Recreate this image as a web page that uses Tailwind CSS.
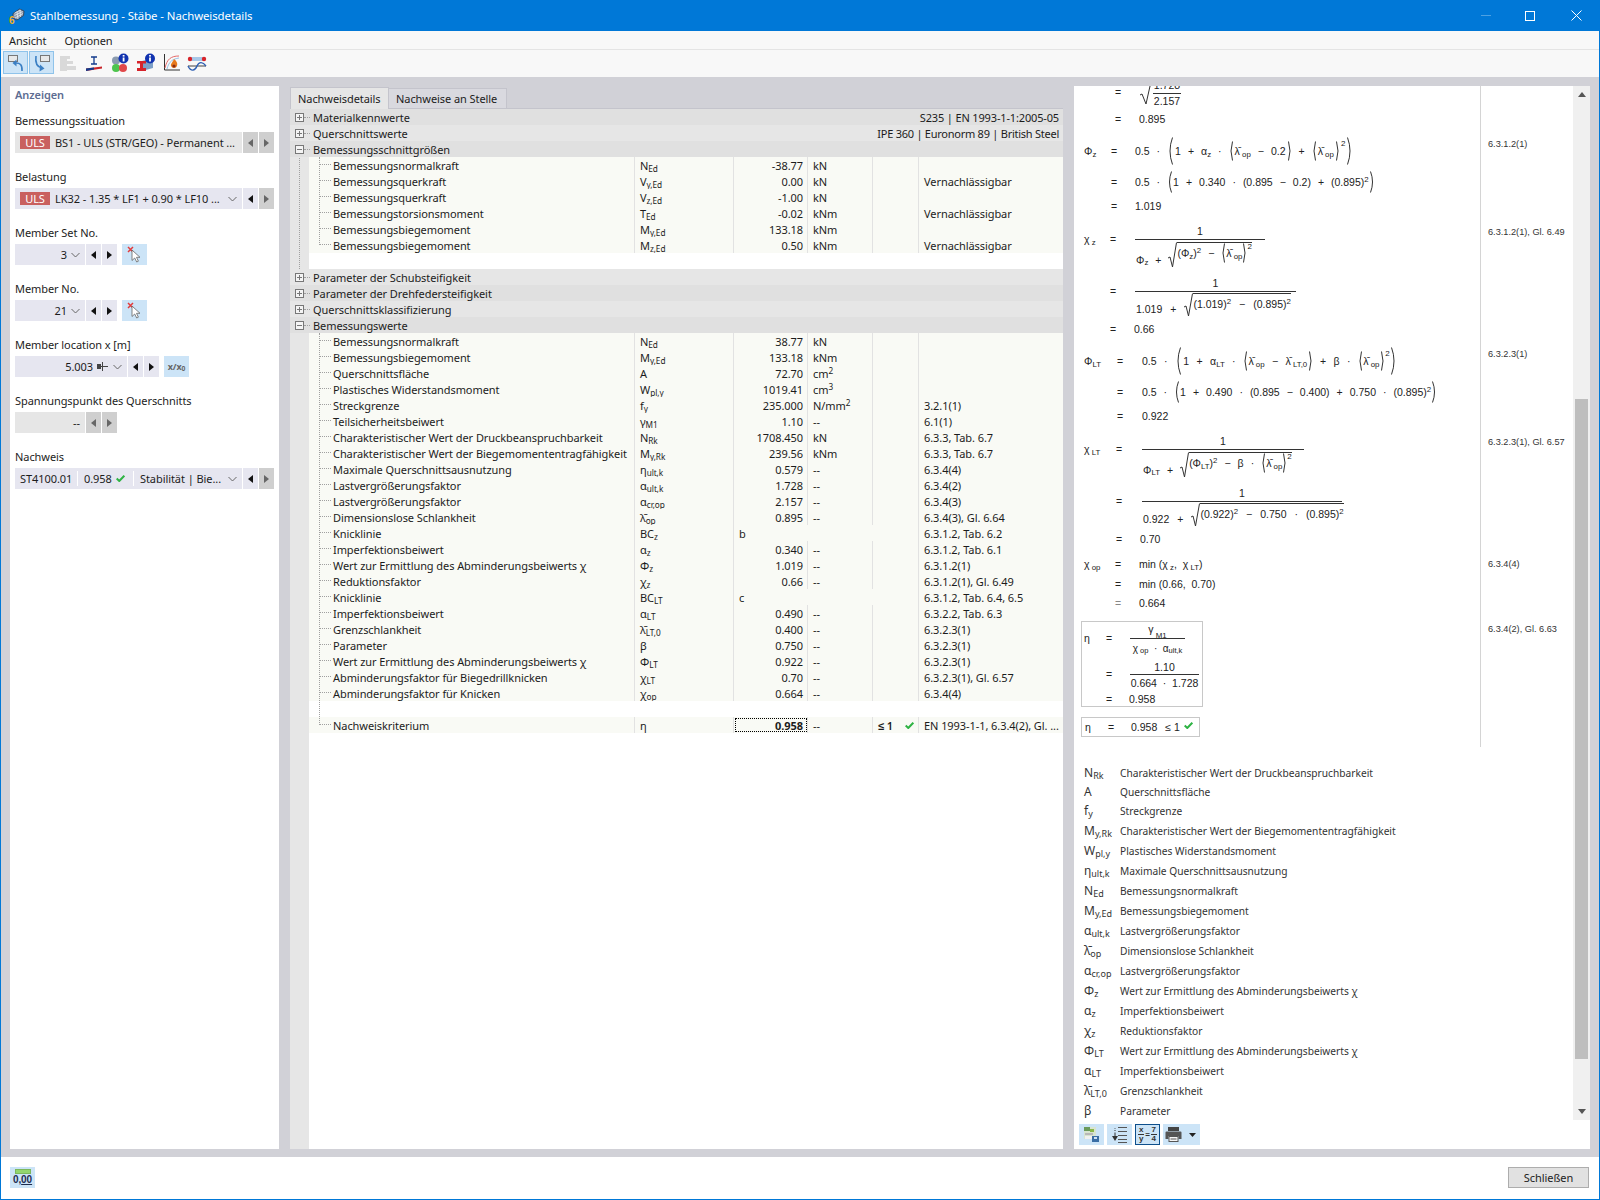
<!DOCTYPE html>
<html lang="de">
<head>
<meta charset="utf-8">
<title>Stahlbemessung</title>
<script src="https://cdn.jsdelivr.net/npm/@tailwindcss/browser@4"></script>
</head>
<body class="w-[1600px] h-[1200px] overflow-hidden bg-white font-['Noto_Sans',sans-serif] text-[11px] tracking-[-0.07px] leading-4 text-[#1c1c1c] whitespace-nowrap">
<div class="flex flex-col h-[1200px] border-x border-b border-[#0078d7]">

<!-- title bar -->
<div class="h-[31px] bg-[#0078d7] flex items-center text-white text-[11.4px] shrink-0">
  <svg class="ml-[8px] w-[16px] h-[16px]" viewBox="0 0 16 16"><path d="M4 5.5 L10.5 1 L15 3 L14.5 7.5 L8 12 L4 10Z" fill="#8f9db0" stroke="#2e3a4c" stroke-width=".8"/><path d="M5.5 5 L12 2 M5.5 7.5 L13.5 3.6 M6 10 L14 5.5 M8 3.5 L9 11 M11 2 L11.5 9" stroke="#eef2f6" stroke-width=".7"/><text x="0" y="15.5" font-size="10" font-weight="700" fill="#f2b01e" font-family="Liberation Sans">6</text></svg>
  <span class="ml-[5px]">Stahlbemessung - Stäbe - Nachweisdetails</span>
  <div class="ml-auto flex items-center">
    <span class="w-[10px] h-px bg-[#4da1e3]"></span>
    <span class="ml-[34px] w-[10px] h-[10px] border border-white"></span>
    <svg class="ml-[36px] mr-[17px] w-[11px] h-[11px]" viewBox="0 0 11 11" stroke="#fff" fill="none"><path d="M.5.5l10 10M10.5.5l-10 10"/></svg>
  </div>
</div>

<!-- menu -->
<div class="h-[18px] bg-[#f8f8f8] flex items-end gap-[18px] pl-[8px] shrink-0">
  <span>Ansicht</span><span>Optionen</span>
</div>
<div class="h-px bg-[#e4e4e4] shrink-0"></div>

<!-- toolbar -->
<div class="h-[27px] bg-[#f8f8f8] flex items-start pt-[1px] pl-[2px] shrink-0">
  <div class="w-[25px] h-[23px] bg-[#cce4f7] border border-[#8fc3ea] flex items-center justify-center">
    <svg class="w-[18px] h-[18px]" viewBox="0 0 18 18" fill="none"><rect x="1.5" y="1.5" width="9" height="6" fill="#e8e8e8" stroke="#777"/><path d="M15 17C15.5 11 13 8.5 8 9" stroke="#3a7fc4" stroke-width="1.6"/><path d="M9.5 5.5 L5.5 9 L9.5 12.5Z" fill="#3a7fc4"/></svg>
  </div>
  <div class="ml-px w-[25px] h-[23px] bg-[#cce4f7] border border-[#8fc3ea] flex items-center justify-center">
    <svg class="w-[18px] h-[18px]" viewBox="0 0 18 18" fill="none"><rect x="7.5" y="1.5" width="9" height="6" fill="#e8e8e8" stroke="#777"/><path d="M3 2C2 9 4 13 9 14" stroke="#3a7fc4" stroke-width="1.6"/><path d="M7 10.5 L11.5 14.5 L6.5 17.5Z" fill="#3a7fc4"/></svg>
  </div>
  <div class="ml-[3px] w-[22px] h-[23px] flex items-center justify-center">
    <svg class="w-[18px] h-[18px]" viewBox="0 0 18 18" fill="#d9d9d9"><rect x="1" y="2" width="7" height="15"/><rect x="8" y="2" width="3" height="3"/><rect x="8" y="7" width="6" height="3"/><rect x="8" y="12" width="9" height="4"/></svg>
  </div>
  <div class="ml-[4px] w-[22px] h-[23px] flex items-center justify-center">
    <svg class="w-[18px] h-[18px]" viewBox="0 0 18 18" fill="none"><path d="M6 3H12M9 3V10M6 10H12" stroke="#123a8c" stroke-width="1.3"/><path d="M1 17V14.5L17 12.5V14.5Z" fill="#c8252a"/><path d="M1 17V14.5L9 13.5V15.5Z" fill="#123a8c"/></svg>
  </div>
  <div class="ml-[4px] w-[22px] h-[23px] flex items-center justify-center">
    <svg class="w-[20px] h-[20px]" viewBox="0 0 20 20"><circle cx="6" cy="7.5" r="4" fill="#8a9bb0"/><circle cx="6" cy="15" r="4" fill="#4dc44d"/><circle cx="13" cy="15" r="4" fill="#e0484a"/><circle cx="13.5" cy="5.5" r="5" fill="#1233b0"/><rect x="12.7" y="4.5" width="1.8" height="4" fill="#fff"/><rect x="12.7" y="2" width="1.8" height="1.6" fill="#fff"/></svg>
  </div>
  <div class="ml-[4px] w-[22px] h-[23px] flex items-center justify-center">
    <svg class="w-[20px] h-[20px]" viewBox="0 0 20 20"><path d="M6 8L17 5V15L6 18Z" fill="#7d9fc7"/><path d="M1 8H10V10.5H7V15H10V18H1V15H4V10.5H1Z" fill="#d6222a"/><circle cx="14" cy="5.5" r="5" fill="#1233b0"/><rect x="13.1" y="4.5" width="1.8" height="4" fill="#fff"/><rect x="13.1" y="2" width="1.8" height="1.6" fill="#fff"/></svg>
  </div>
  <div class="ml-[3px] w-[22px] h-[23px] flex items-center justify-center">
    <svg class="w-[19px] h-[19px]" viewBox="0 0 19 19" fill="none"><path d="M2.5 1V17H18" stroke="#333"/><path d="M3 15C5 6 9 3 17 3" stroke="#e56a6a"/><path d="M5 16C7 8 11 6 17 5" stroke="#9cc4e8"/><path d="M12 6C14.5 8 16 10 15 13a3.2 3.2 0 0 1-6 0C8.5 10.5 11 9 12 6Z" fill="#e8791a"/><circle cx="12" cy="13" r="1.6" fill="#8a2b12"/></svg>
  </div>
  <div class="ml-[4px] w-[22px] h-[23px] flex items-center justify-center">
    <svg class="w-[20px] h-[18px]" viewBox="0 0 20 18" fill="none"><rect x="2" y="3" width="16" height="4" fill="#a8c8e8"/><circle cx="3" cy="5" r="2.2" fill="#d8242a"/><circle cx="17" cy="5" r="2.2" fill="#d8242a"/><path d="M1 12H19" stroke="#444"/><path d="M1 12C4 18 8 17 10 12C12 7 16 8 19 12" stroke="#2e5fb3" stroke-width="1.4"/></svg>
  </div>
</div>

<!-- main area -->
<div class="flex-1 min-h-0 bg-[#d1d1d7] flex pl-[9px] pt-[9px] pb-[8px] gap-[11px]">

  <!-- left panel -->
  <div class="w-[269px] bg-white pl-[5px] flex flex-col shrink-0">
    <div class="mt-px h-4 text-[#5d6d92] font-semibold">Anzeigen</div>
    <div class="mt-[10px] flex flex-col gap-[16px]">

      <div>
        <div class="h-4">Bemessungssituation</div>
        <div class="mt-[3px] h-[21px] flex items-stretch gap-px">
          <div class="w-[227px] bg-[#e6e6e6] flex items-center pl-[5px]"><span class="w-[30px] h-[13px] bg-[#c9605f] text-white flex items-center justify-center">ULS</span><span class="ml-[5px]">BS1 - ULS (STR/GEO) - Permanent ...</span></div>
          <div class="w-[15px] bg-[#cfcfcf] flex items-center justify-center"><svg class="w-[5px] h-[8px]" viewBox="0 0 5 8"><path d="M5 0V8L0 4Z" fill="#666"/></svg></div>
          <div class="w-[15px] bg-[#cfcfcf] flex items-center justify-center"><svg class="w-[5px] h-[8px]" viewBox="0 0 5 8"><path d="M0 0V8L5 4Z" fill="#666"/></svg></div>
        </div>
      </div>

      <div>
        <div class="h-4">Belastung</div>
        <div class="mt-[3px] h-[21px] flex items-stretch gap-px">
          <div class="w-[227px] bg-[#e6e6f0] flex items-center pl-[5px] pr-[5px]"><span class="w-[30px] h-[13px] bg-[#c9605f] text-white flex items-center justify-center">ULS</span><span class="ml-[5px]">LK32 - 1.35 * LF1 + 0.90 * LF10 ...</span><svg class="ml-auto w-[9px] h-[6px]" viewBox="0 0 9 6" fill="none" stroke="#666"><path d="M.5 1L4.5 5L8.5 1"/></svg></div>
          <div class="w-[15px] bg-[#e6e6f0] flex items-center justify-center"><svg class="w-[5px] h-[8px]" viewBox="0 0 5 8"><path d="M5 0V8L0 4Z" fill="#111"/></svg></div>
          <div class="w-[15px] bg-[#cfcfcf] flex items-center justify-center"><svg class="w-[5px] h-[8px]" viewBox="0 0 5 8"><path d="M0 0V8L5 4Z" fill="#666"/></svg></div>
        </div>
      </div>

      <div>
        <div class="h-4">Member Set No.</div>
        <div class="mt-[3px] h-[21px] flex items-stretch gap-px">
          <div class="w-[70px] bg-[#e6e6f0] flex items-center justify-end pr-[5px]"><span>3</span><svg class="ml-[4px] w-[9px] h-[6px]" viewBox="0 0 9 6" fill="none" stroke="#666"><path d="M.5 1L4.5 5L8.5 1"/></svg></div>
          <div class="w-[15px] bg-[#e6e6f0] flex items-center justify-center"><svg class="w-[5px] h-[8px]" viewBox="0 0 5 8"><path d="M5 0V8L0 4Z" fill="#111"/></svg></div>
          <div class="w-[15px] bg-[#e6e6f0] flex items-center justify-center"><svg class="w-[5px] h-[8px]" viewBox="0 0 5 8"><path d="M0 0V8L5 4Z" fill="#111"/></svg></div>
          <div class="ml-[4px] w-[25px] bg-[#cce4f7] flex items-center justify-center"><svg class="w-[16px] h-[17px]" viewBox="0 0 16 17" fill="none"><path d="M1 1L6 6M6 1L1 6" stroke="#e23b3b" stroke-width="1.5"/><path d="M5 4V14.5L7.7 12L9.7 16L11.4 15.2L9.5 11.3H13Z" fill="#fff" stroke="#666" stroke-width=".8"/></svg></div>
        </div>
      </div>

      <div>
        <div class="h-4">Member No.</div>
        <div class="mt-[3px] h-[21px] flex items-stretch gap-px">
          <div class="w-[70px] bg-[#e6e6f0] flex items-center justify-end pr-[5px]"><span>21</span><svg class="ml-[4px] w-[9px] h-[6px]" viewBox="0 0 9 6" fill="none" stroke="#666"><path d="M.5 1L4.5 5L8.5 1"/></svg></div>
          <div class="w-[15px] bg-[#e6e6f0] flex items-center justify-center"><svg class="w-[5px] h-[8px]" viewBox="0 0 5 8"><path d="M5 0V8L0 4Z" fill="#111"/></svg></div>
          <div class="w-[15px] bg-[#e6e6f0] flex items-center justify-center"><svg class="w-[5px] h-[8px]" viewBox="0 0 5 8"><path d="M0 0V8L5 4Z" fill="#111"/></svg></div>
          <div class="ml-[4px] w-[25px] bg-[#cce4f7] flex items-center justify-center"><svg class="w-[16px] h-[17px]" viewBox="0 0 16 17" fill="none"><path d="M1 1L6 6M6 1L1 6" stroke="#e23b3b" stroke-width="1.5"/><path d="M5 4V14.5L7.7 12L9.7 16L11.4 15.2L9.5 11.3H13Z" fill="#fff" stroke="#666" stroke-width=".8"/></svg></div>
        </div>
      </div>

      <div>
        <div class="h-4">Member location x [m]</div>
        <div class="mt-[3px] h-[21px] flex items-stretch gap-px">
          <div class="w-[112px] bg-[#e6e6f0] flex items-center justify-end pr-[5px]"><span>5.003</span><svg class="ml-[4px] w-[11px] h-[9px]" viewBox="0 0 11 9"><rect x="0" y="2" width="4" height="5" fill="#444"/><path d="M4 4.5H11M5.5 0V9" stroke="#444"/></svg><svg class="ml-[5px] w-[9px] h-[6px]" viewBox="0 0 9 6" fill="none" stroke="#666"><path d="M.5 1L4.5 5L8.5 1"/></svg></div>
          <div class="w-[15px] bg-[#e6e6f0] flex items-center justify-center"><svg class="w-[5px] h-[8px]" viewBox="0 0 5 8"><path d="M5 0V8L0 4Z" fill="#111"/></svg></div>
          <div class="w-[15px] bg-[#e6e6f0] flex items-center justify-center"><svg class="w-[5px] h-[8px]" viewBox="0 0 5 8"><path d="M0 0V8L5 4Z" fill="#111"/></svg></div>
          <div class="ml-[4px] w-[25px] bg-[#cce4f7] flex items-center justify-center text-[9px] font-bold text-[#666]"><span>x/x<sub>0</sub></span></div>
        </div>
      </div>

      <div>
        <div class="h-4">Spannungspunkt des Querschnitts</div>
        <div class="mt-[3px] h-[21px] flex items-stretch gap-px">
          <div class="w-[70px] bg-[#e6e6e6] flex items-center justify-end pr-[5px]"><span>--</span></div>
          <div class="w-[15px] bg-[#cfcfcf] flex items-center justify-center"><svg class="w-[5px] h-[8px]" viewBox="0 0 5 8"><path d="M5 0V8L0 4Z" fill="#666"/></svg></div>
          <div class="w-[15px] bg-[#cfcfcf] flex items-center justify-center"><svg class="w-[5px] h-[8px]" viewBox="0 0 5 8"><path d="M0 0V8L5 4Z" fill="#666"/></svg></div>
        </div>
      </div>

      <div>
        <div class="h-4">Nachweis</div>
        <div class="mt-[3px] h-[21px] flex items-stretch gap-px">
          <div class="w-[227px] bg-[#e6e6f0] flex items-center pl-[5px] pr-[5px]">
            <span class="w-[57px]">ST4100.01</span><span class="h-[15px] w-px bg-white"></span>
            <span class="ml-[6px] w-[32px]">0.958</span><svg class="w-[9px] h-[7px]" viewBox="0 0 9 7" fill="none" stroke="#2fb344" stroke-width="2"><path d="M.7 3.5L3.3 6L8.3 .7"/></svg>
            <span class="ml-[8px] h-[15px] w-px bg-white"></span><span class="ml-[6px]">Stabilität | Bie...</span>
            <svg class="ml-auto w-[9px] h-[6px]" viewBox="0 0 9 6" fill="none" stroke="#666"><path d="M.5 1L4.5 5L8.5 1"/></svg>
          </div>
          <div class="w-[15px] bg-[#e6e6f0] flex items-center justify-center"><svg class="w-[5px] h-[8px]" viewBox="0 0 5 8"><path d="M5 0V8L0 4Z" fill="#111"/></svg></div>
          <div class="w-[15px] bg-[#cfcfcf] flex items-center justify-center"><svg class="w-[5px] h-[8px]" viewBox="0 0 5 8"><path d="M0 0V8L5 4Z" fill="#666"/></svg></div>
        </div>
      </div>

    </div>
  </div>

  <!-- middle panel -->
  <div class="w-[773px] flex flex-col shrink-0">
    <div class="h-[23px] flex items-end border-b border-[#c4c4cc] shrink-0">
      <div class="w-[99px] h-[22px] bg-[#e6e6e6] border-x border-t border-[#c4c4cc] flex items-center pl-[7px] -mb-px">Nachweisdetails</div>
      <div class="w-[118px] h-[20px] bg-[#d9d9df] border-r border-t border-[#c4c4cc] flex items-center pl-[7px]">Nachweise an Stelle</div>
    </div>
    <div class="relative flex-1 min-h-0 bg-[#e6e6e6] flex flex-col">
      <span class="absolute left-[9px] top-[6px] h-[210px] border-l border-dotted border-[#a0a0a0]"></span>

      <div class="relative h-4 bg-[#e0e0e0] flex items-center pl-[5px] pr-[4px]">
        <svg class="w-[9px] h-[9px] shrink-0" viewBox="0 0 9 9" fill="#f4f4f4" stroke="#777"><rect x=".5" y=".5" width="8" height="8"/><path d="M2 4.5H7M4.5 2V7"/></svg><span class="w-[6px] border-t border-dotted border-[#a0a0a0]"></span>
        <span class="ml-[3px] mt-[2px]">Materialkennwerte</span><span class="ml-auto mt-[2px] tracking-[-0.15px]">S235 | EN 1993-1-1:2005-05</span>
      </div>
      <div class="relative h-4 bg-[#e6e6e6] flex items-center pl-[5px] pr-[4px]">
        <svg class="w-[9px] h-[9px] shrink-0" viewBox="0 0 9 9" fill="#f4f4f4" stroke="#777"><rect x=".5" y=".5" width="8" height="8"/><path d="M2 4.5H7M4.5 2V7"/></svg><span class="w-[6px] border-t border-dotted border-[#a0a0a0]"></span>
        <span class="ml-[3px] mt-[2px]">Querschnittswerte</span><span class="ml-auto mt-[2px] tracking-[-0.25px]">IPE 360 | Euronorm 89 | British Steel</span>
      </div>
      <div class="relative h-4 bg-[#e0e0e0] flex items-center pl-[5px] pr-[4px]">
        <svg class="w-[9px] h-[9px] shrink-0" viewBox="0 0 9 9" fill="#f4f4f4" stroke="#777"><rect x=".5" y=".5" width="8" height="8"/><path d="M2 4.5H7"/></svg><span class="w-[6px] border-t border-dotted border-[#a0a0a0]"></span>
        <span class="ml-[3px] mt-[2px]">Bemessungsschnittgrößen</span>
      </div>

      <div class="relative ml-[19px]">
        <span class="absolute left-[10px] top-0 h-[88px] border-l border-dotted border-[#a0a0a0] z-10"></span>
        <table class="table-fixed w-[754px] border-separate border-spacing-0 bg-[#f9faf5] [&_td]:h-4 [&_td]:pt-px [&_td]:pb-0 [&_td]:px-0 [&_td]:leading-[15px] [&_td]:overflow-hidden [&_td]:border-r [&_td]:border-[#e2e2e2] [&_td:last-child]:border-r-0 [&_td:nth-child(n+2)]:pl-[5px] [&_td:nth-child(3)]:text-right [&_td:nth-child(3)]:pr-[4px] [&_td:first-child]:relative [&_td:first-child]:pl-[24px] [&_td:first-child]:before:content-[''] [&_td:first-child]:before:absolute [&_td:first-child]:before:left-[11px] [&_td:first-child]:before:top-[7px] [&_td:first-child]:before:w-[11px] [&_td:first-child]:before:border-t [&_td:first-child]:before:border-dotted [&_td:first-child]:before:border-[#a0a0a0]">
          <colgroup><col class="w-[326px]"><col class="w-[99px]"><col class="w-[74px]"><col class="w-[65px]"><col class="w-[46px]"><col class="w-[144px]"></colgroup>
          <tr><td>Bemessungsnormalkraft</td><td>N<sub>Ed</sub></td><td>-38.77</td><td>kN</td><td></td><td></td></tr>
          <tr><td>Bemessungsquerkraft</td><td>V<sub>y,Ed</sub></td><td>0.00</td><td>kN</td><td></td><td>Vernachlässigbar</td></tr>
          <tr><td>Bemessungsquerkraft</td><td>V<sub>z,Ed</sub></td><td>-1.00</td><td>kN</td><td></td><td></td></tr>
          <tr><td>Bemessungstorsionsmoment</td><td>T<sub>Ed</sub></td><td>-0.02</td><td>kNm</td><td></td><td>Vernachlässigbar</td></tr>
          <tr><td>Bemessungsbiegemoment</td><td>M<sub>y,Ed</sub></td><td>133.18</td><td>kNm</td><td></td><td></td></tr>
          <tr><td>Bemessungsbiegemoment</td><td>M<sub>z,Ed</sub></td><td>0.50</td><td>kNm</td><td></td><td>Vernachlässigbar</td></tr>
        </table>
      </div>
      <div class="ml-[19px] h-4 bg-white"></div>

      <div class="relative h-4 bg-[#e6e6e6] flex items-center pl-[5px] pr-[4px]">
        <svg class="w-[9px] h-[9px] shrink-0" viewBox="0 0 9 9" fill="#f4f4f4" stroke="#777"><rect x=".5" y=".5" width="8" height="8"/><path d="M2 4.5H7M4.5 2V7"/></svg><span class="w-[6px] border-t border-dotted border-[#a0a0a0]"></span>
        <span class="ml-[3px] mt-[2px]">Parameter der Schubsteifigkeit</span>
      </div>
      <div class="relative h-4 bg-[#e0e0e0] flex items-center pl-[5px] pr-[4px]">
        <svg class="w-[9px] h-[9px] shrink-0" viewBox="0 0 9 9" fill="#f4f4f4" stroke="#777"><rect x=".5" y=".5" width="8" height="8"/><path d="M2 4.5H7M4.5 2V7"/></svg><span class="w-[6px] border-t border-dotted border-[#a0a0a0]"></span>
        <span class="ml-[3px] mt-[2px]">Parameter der Drehfedersteifigkeit</span>
      </div>
      <div class="relative h-4 bg-[#e6e6e6] flex items-center pl-[5px] pr-[4px]">
        <svg class="w-[9px] h-[9px] shrink-0" viewBox="0 0 9 9" fill="#f4f4f4" stroke="#777"><rect x=".5" y=".5" width="8" height="8"/><path d="M2 4.5H7M4.5 2V7"/></svg><span class="w-[6px] border-t border-dotted border-[#a0a0a0]"></span>
        <span class="ml-[3px] mt-[2px]">Querschnittsklassifizierung</span>
      </div>
      <div class="relative h-4 bg-[#e0e0e0] flex items-center pl-[5px] pr-[4px]">
        <svg class="w-[9px] h-[9px] shrink-0" viewBox="0 0 9 9" fill="#f4f4f4" stroke="#777"><rect x=".5" y=".5" width="8" height="8"/><path d="M2 4.5H7"/></svg><span class="w-[6px] border-t border-dotted border-[#a0a0a0]"></span>
        <span class="ml-[3px] mt-[2px]">Bemessungswerte</span>
      </div>

      <div class="relative ml-[19px] bg-white">
        <span class="absolute left-[10px] top-0 h-[392px] border-l border-dotted border-[#a0a0a0] z-10"></span>
        <table class="table-fixed w-[754px] border-separate border-spacing-0 bg-[#f9faf5] [&_td]:h-4 [&_td]:pt-px [&_td]:pb-0 [&_td]:px-0 [&_td]:leading-[15px] [&_td]:overflow-hidden [&_td]:border-r [&_td]:border-[#e2e2e2] [&_td:last-child]:border-r-0 [&_td:nth-child(n+2)]:pl-[5px] [&_td:nth-child(3)]:text-right [&_td:nth-child(3)]:pr-[4px] [&_td:first-child]:relative [&_td:first-child]:pl-[24px] [&_td:first-child]:before:content-[''] [&_td:first-child]:before:absolute [&_td:first-child]:before:left-[11px] [&_td:first-child]:before:top-[7px] [&_td:first-child]:before:w-[11px] [&_td:first-child]:before:border-t [&_td:first-child]:before:border-dotted [&_td:first-child]:before:border-[#a0a0a0]">
          <colgroup><col class="w-[326px]"><col class="w-[99px]"><col class="w-[74px]"><col class="w-[65px]"><col class="w-[46px]"><col class="w-[144px]"></colgroup>
          <tr><td>Bemessungsnormalkraft</td><td>N<sub>Ed</sub></td><td>38.77</td><td>kN</td><td></td><td></td></tr>
          <tr><td>Bemessungsbiegemoment</td><td>M<sub>y,Ed</sub></td><td>133.18</td><td>kNm</td><td></td><td></td></tr>
          <tr><td>Querschnittsfläche</td><td>A</td><td>72.70</td><td>cm<sup>2</sup></td><td></td><td></td></tr>
          <tr><td>Plastisches Widerstandsmoment</td><td>W<sub>pl,y</sub></td><td>1019.41</td><td>cm<sup>3</sup></td><td></td><td></td></tr>
          <tr><td>Streckgrenze</td><td>f<sub>y</sub></td><td>235.000</td><td>N/mm<sup>2</sup></td><td></td><td>3.2.1(1)</td></tr>
          <tr><td>Teilsicherheitsbeiwert</td><td>γ<sub>M1</sub></td><td>1.10</td><td>--</td><td></td><td>6.1(1)</td></tr>
          <tr><td>Charakteristischer Wert der Druckbeanspruchbarkeit</td><td>N<sub>Rk</sub></td><td>1708.450</td><td>kN</td><td></td><td>6.3.3, Tab. 6.7</td></tr>
          <tr><td>Charakteristischer Wert der Biegemomententragfähigkeit</td><td>M<sub>y,Rk</sub></td><td>239.56</td><td>kNm</td><td></td><td>6.3.3, Tab. 6.7</td></tr>
          <tr><td>Maximale Querschnittsausnutzung</td><td>η<sub>ult,k</sub></td><td>0.579</td><td>--</td><td></td><td>6.3.4(4)</td></tr>
          <tr><td>Lastvergrößerungsfaktor</td><td>α<sub>ult,k</sub></td><td>1.728</td><td>--</td><td></td><td>6.3.4(2)</td></tr>
          <tr><td>Lastvergrößerungsfaktor</td><td>α<sub>cr,op</sub></td><td>2.157</td><td>--</td><td></td><td>6.3.4(3)</td></tr>
          <tr><td>Dimensionslose Schlankheit</td><td>λ̄<sub>op</sub></td><td>0.895</td><td>--</td><td></td><td>6.3.4(3), Gl. 6.64</td></tr>
          <tr><td>Knicklinie</td><td>BC<sub>z</sub></td><td colspan="3" class="!text-left">b</td><td>6.3.1.2, Tab. 6.2</td></tr>
          <tr><td>Imperfektionsbeiwert</td><td>α<sub>z</sub></td><td>0.340</td><td>--</td><td></td><td>6.3.1.2, Tab. 6.1</td></tr>
          <tr><td>Wert zur Ermittlung des Abminderungsbeiwerts χ</td><td>Φ<sub>z</sub></td><td>1.019</td><td>--</td><td></td><td>6.3.1.2(1)</td></tr>
          <tr><td>Reduktionsfaktor</td><td>χ<sub>z</sub></td><td>0.66</td><td>--</td><td></td><td>6.3.1.2(1), Gl. 6.49</td></tr>
          <tr><td>Knicklinie</td><td>BC<sub>LT</sub></td><td colspan="3" class="!text-left">c</td><td>6.3.1.2, Tab. 6.4, 6.5</td></tr>
          <tr><td>Imperfektionsbeiwert</td><td>α<sub>LT</sub></td><td>0.490</td><td>--</td><td></td><td>6.3.2.2, Tab. 6.3</td></tr>
          <tr><td>Grenzschlankheit</td><td>λ̄<sub>LT,0</sub></td><td>0.400</td><td>--</td><td></td><td>6.3.2.3(1)</td></tr>
          <tr><td>Parameter</td><td>β</td><td>0.750</td><td>--</td><td></td><td>6.3.2.3(1)</td></tr>
          <tr><td>Wert zur Ermittlung des Abminderungsbeiwerts χ</td><td>Φ<sub>LT</sub></td><td>0.922</td><td>--</td><td></td><td>6.3.2.3(1)</td></tr>
          <tr><td>Abminderungsfaktor für Biegedrillknicken</td><td>χ<sub>LT</sub></td><td>0.70</td><td>--</td><td></td><td>6.3.2.3(1), Gl. 6.57</td></tr>
          <tr><td>Abminderungsfaktor für Knicken</td><td>χ<sub>op</sub></td><td>0.664</td><td>--</td><td></td><td>6.3.4(4)</td></tr>
        </table>
        <div class="h-4 bg-white"></div>
        <table class="table-fixed w-[754px] border-separate border-spacing-0 bg-[#f9faf5] [&_td]:h-4 [&_td]:pt-px [&_td]:pb-0 [&_td]:px-0 [&_td]:leading-[15px] [&_td]:overflow-hidden [&_td]:border-r [&_td]:border-[#e2e2e2] [&_td:last-child]:border-r-0 [&_td:nth-child(n+2)]:pl-[5px] [&_td:nth-child(3)]:text-right [&_td:nth-child(3)]:pr-[4px] [&_td:first-child]:relative [&_td:first-child]:pl-[24px] [&_td:first-child]:before:content-[''] [&_td:first-child]:before:absolute [&_td:first-child]:before:left-[11px] [&_td:first-child]:before:top-[7px] [&_td:first-child]:before:w-[11px] [&_td:first-child]:before:border-t [&_td:first-child]:before:border-dotted [&_td:first-child]:before:border-[#a0a0a0]">
          <colgroup><col class="w-[326px]"><col class="w-[99px]"><col class="w-[74px]"><col class="w-[65px]"><col class="w-[46px]"><col class="w-[144px]"></colgroup>
          <tr><td>Nachweiskriterium</td><td>η</td><td class="font-bold outline-1 outline-dotted outline-black -outline-offset-2">0.958</td><td>--</td><td class="font-semibold"><span class="flex items-center justify-between pr-[4px]"><span>≤ 1</span><svg class="w-[9px] h-[7px]" viewBox="0 0 9 7" fill="none" stroke="#2fb344" stroke-width="2"><path d="M.7 3.5L3.3 6L8.3 .7"/></svg></span></td><td>EN 1993-1-1, 6.3.4(2), Gl. ...</td></tr>
        </table>
      </div>
      <div class="ml-[19px] flex-1 bg-white"></div>
    </div>
  </div>

  <!-- right panel -->
  <div class="w-[516px] flex flex-col shrink-0 bg-white">
    <div class="h-[1034px] flex shrink-0">
      <div class="w-[499px] overflow-hidden">
        <div class="h-[661px] flex">
          <!-- formulas -->
          <div class="w-[407px] pl-[10px] overflow-hidden font-['Liberation_Sans',sans-serif] text-[10.5px] tracking-normal text-[#222] border-r border-[#d4d4d4] whitespace-nowrap">

            <div class="-mt-[2px] flex h-4 items-center"><span class="ml-[31px] w-[24px]">=</span>
              <span class="flex items-center"><svg class="w-[13px] h-[26px]" viewBox="0 0 13 26" fill="none" stroke="#333"><path d="M1 16L3 15L7 25L12.5 .5"/></svg>
                <span class="ml-px flex flex-col items-center w-[28px]"><span class="h-[17px] flex items-end">1.728</span><span class="h-px w-full bg-[#333]"></span><span class="h-[15px] leading-[15px]">2.157</span></span></span>
            </div>
            <div class="mt-[11px] flex h-4 items-center"><span class="ml-[31px] w-[24px]">=</span><span>0.895</span></div>

            <div class="mt-[16px] flex h-4 items-center"><span class="w-[27px]">Φ<sub>z</sub></span><span class="w-[24px]">=</span>
              <span class="flex items-center gap-[7px]"><span>0.5</span><span>·</span>
                <svg class="w-[6px] h-7" viewBox="0 0 6 28" fill="none" stroke="#333"><path d="M5.5 .5Q.5 14 5.5 27.5"/></svg><span class="-ml-[5px]">1</span><span>+</span><span>α<sub>z</sub></span><span>·</span>
                <svg class="w-[4px] h-[20px]" viewBox="0 0 4 20" fill="none" stroke="#333"><path d="M3.5 .5Q.5 10 3.5 19.5"/></svg><span class="-ml-[5px]">λ̄<sub>&nbsp;op</sub></span><span>−</span><span>0.2</span>
                <svg class="-ml-[5px] w-[4px] h-[20px]" viewBox="0 0 4 20" fill="none" stroke="#333"><path d="M.5 .5Q3.5 10 .5 19.5"/></svg><span>+</span>
                <svg class="w-[4px] h-[20px]" viewBox="0 0 4 20" fill="none" stroke="#333"><path d="M3.5 .5Q.5 10 3.5 19.5"/></svg><span class="-ml-[5px]">λ̄<sub>&nbsp;op</sub></span>
                <svg class="-ml-[5px] w-[4px] h-[20px]" viewBox="0 0 4 20" fill="none" stroke="#333"><path d="M.5 .5Q3.5 10 .5 19.5"/></svg><span class="-ml-[6px] -mt-[14px] text-[8px]">2</span>
                <svg class="-ml-[5px] w-[6px] h-7" viewBox="0 0 6 28" fill="none" stroke="#333"><path d="M.5 .5Q5.5 14 .5 27.5"/></svg>
              </span>
            </div>
            <div class="mt-[15px] flex h-4 items-center"><span class="ml-[27px] w-[24px]">=</span>
              <span class="flex items-center gap-[7px]"><span>0.5</span><span>·</span>
                <svg class="w-[5px] h-[22px]" viewBox="0 0 5 22" fill="none" stroke="#333"><path d="M4.5 .5Q.5 11 4.5 21.5"/></svg><span class="-ml-[6px]">1</span><span>+</span><span>0.340</span><span>·</span><span>(0.895</span><span>−</span><span>0.2)</span><span>+</span><span>(0.895)<sup>2</sup></span>
                <svg class="-ml-[6px] w-[5px] h-[22px]" viewBox="0 0 5 22" fill="none" stroke="#333"><path d="M.5 .5Q4.5 11 .5 21.5"/></svg>
              </span>
            </div>
            <div class="mt-[8px] flex h-4 items-center"><span class="ml-[27px] w-[24px]">=</span><span>1.019</span></div>

            <div class="mt-[17px] flex h-4 items-center"><span class="w-[26px]">χ<sub>&nbsp;z</sub></span><span class="w-[25px]">=</span>
              <span class="flex flex-col items-center w-[130px]"><span class="h-[28px] flex items-end">1</span><span class="h-px w-full bg-[#333]"></span>
                <span class="h-[28px] pt-[2px] flex items-start gap-[7px] w-full"><span class="mt-[10px] ml-[1px] flex gap-[7px]"><span>Φ<sub>z</sub></span><span>+</span></span>
                  <span class="flex"><svg class="w-[9px] h-[26px]" viewBox="0 0 9 26" fill="none" stroke="#333"><path d="M0 16L2 15L4.5 25L8.5 .5"/></svg>
                  <span class="flex items-center gap-[7px] border-t border-[#333] h-[22px]"><span>(Φ<sub>z</sub>)<sup>2</sup></span><span>−</span><svg class="w-[4px] h-[20px]" viewBox="0 0 4 20" fill="none" stroke="#333"><path d="M3.5 .5Q.5 10 3.5 19.5"/></svg><span class="-ml-[6px]">λ̄<sub>&nbsp;op</sub></span><svg class="-ml-[6px] w-[4px] h-[20px]" viewBox="0 0 4 20" fill="none" stroke="#333"><path d="M.5 .5Q3.5 10 .5 19.5"/></svg><span class="-ml-[7px] -mt-[12px] text-[8px]">2</span></span></span>
                </span></span>
            </div>
            <div class="mt-[36px] flex h-4 items-center"><span class="ml-[26px] w-[25px]">=</span>
              <span class="flex flex-col items-center w-[161px]"><span class="h-[24px] flex items-end">1</span><span class="h-px w-full bg-[#333]"></span>
                <span class="h-[24px] flex items-start gap-[8px] w-full"><span class="mt-[9px] ml-[1px] flex gap-[8px]"><span>1.019</span><span>+</span></span>
                  <span class="flex mt-[1px]"><svg class="w-[9px] h-[24px]" viewBox="0 0 9 24" fill="none" stroke="#333"><path d="M0 14L2 13L4.5 23L8.5 .5"/></svg>
                  <span class="flex items-center gap-[8px] border-t border-[#333] h-[21px]"><span>(1.019)<sup>2</sup></span><span>−</span><span>(0.895)<sup>2</sup></span></span></span>
                </span></span>
            </div>
            <div class="mt-[22px] flex h-4 items-center"><span class="ml-[26px] w-[24px]">=</span><span>0.66</span></div>

            <div class="mt-[16px] flex h-4 items-center"><span class="w-[33px]">Φ<sub>LT</sub></span><span class="w-[25px]">=</span>
              <span class="flex items-center gap-[7.4px]"><span>0.5</span><span>·</span>
                <svg class="w-[6px] h-7" viewBox="0 0 6 28" fill="none" stroke="#333"><path d="M5.5 .5Q.5 14 5.5 27.5"/></svg><span class="-ml-[5px]">1</span><span>+</span><span>α<sub>LT</sub></span><span>·</span>
                <svg class="w-[4px] h-[20px]" viewBox="0 0 4 20" fill="none" stroke="#333"><path d="M3.5 .5Q.5 10 3.5 19.5"/></svg><span class="-ml-[6px]">λ̄<sub>&nbsp;op</sub></span><span>−</span><span>λ̄<sub>&nbsp;LT,0</sub></span>
                <svg class="-ml-[6px] w-[4px] h-[20px]" viewBox="0 0 4 20" fill="none" stroke="#333"><path d="M.5 .5Q3.5 10 .5 19.5"/></svg><span>+</span><span>β</span><span>·</span>
                <svg class="w-[4px] h-[20px]" viewBox="0 0 4 20" fill="none" stroke="#333"><path d="M3.5 .5Q.5 10 3.5 19.5"/></svg><span class="-ml-[6px]">λ̄<sub>&nbsp;op</sub></span>
                <svg class="-ml-[6px] w-[4px] h-[20px]" viewBox="0 0 4 20" fill="none" stroke="#333"><path d="M.5 .5Q3.5 10 .5 19.5"/></svg><span class="-ml-[7px] -mt-[14px] text-[8px]">2</span>
                <svg class="-ml-[6px] w-[6px] h-7" viewBox="0 0 6 28" fill="none" stroke="#333"><path d="M.5 .5Q5.5 14 .5 27.5"/></svg>
              </span>
            </div>
            <div class="mt-[15px] flex h-4 items-center"><span class="ml-[33px] w-[25px]">=</span>
              <span class="flex items-center gap-[7px]"><span>0.5</span><span>·</span>
                <svg class="w-[5px] h-[22px]" viewBox="0 0 5 22" fill="none" stroke="#333"><path d="M4.5 .5Q.5 11 4.5 21.5"/></svg><span class="-ml-[6px]">1</span><span>+</span><span>0.490</span><span>·</span><span>(0.895</span><span>−</span><span>0.400)</span><span>+</span><span>0.750</span><span>·</span><span>(0.895)<sup>2</sup></span>
                <svg class="-ml-[6px] w-[5px] h-[22px]" viewBox="0 0 5 22" fill="none" stroke="#333"><path d="M.5 .5Q4.5 11 .5 21.5"/></svg>
              </span>
            </div>
            <div class="mt-[8px] flex h-4 items-center"><span class="ml-[33px] w-[25px]">=</span><span>0.922</span></div>

            <div class="mt-[17px] flex h-4 items-center"><span class="w-[32px]">χ<sub>&nbsp;LT</sub></span><span class="w-[26px]">=</span>
              <span class="flex flex-col items-center w-[162px]"><span class="h-[28px] flex items-end">1</span><span class="h-px w-full bg-[#333]"></span>
                <span class="h-[28px] pt-[2px] flex items-start gap-[7px] w-full"><span class="mt-[10px] ml-[1px] flex gap-[7px]"><span>Φ<sub>LT</sub></span><span>+</span></span>
                  <span class="flex"><svg class="w-[9px] h-[26px]" viewBox="0 0 9 26" fill="none" stroke="#333"><path d="M0 16L2 15L4.5 25L8.5 .5"/></svg>
                  <span class="flex items-center gap-[7px] border-t border-[#333] h-[22px]"><span>(Φ<sub>LT</sub>)<sup>2</sup></span><span>−</span><span>β</span><span>·</span><svg class="w-[4px] h-[20px]" viewBox="0 0 4 20" fill="none" stroke="#333"><path d="M3.5 .5Q.5 10 3.5 19.5"/></svg><span class="-ml-[6px]">λ̄<sub>&nbsp;op</sub></span><svg class="-ml-[6px] w-[4px] h-[20px]" viewBox="0 0 4 20" fill="none" stroke="#333"><path d="M.5 .5Q3.5 10 .5 19.5"/></svg><span class="-ml-[7px] -mt-[12px] text-[8px]">2</span></span></span>
                </span></span>
            </div>
            <div class="mt-[36px] flex h-4 items-center"><span class="ml-[32px] w-[26px]">=</span>
              <span class="flex flex-col items-center w-[200px]"><span class="h-[24px] flex items-end">1</span><span class="h-px w-full bg-[#333]"></span>
                <span class="h-[24px] flex items-start gap-[8px] w-full"><span class="mt-[9px] ml-[1px] flex gap-[8px]"><span>0.922</span><span>+</span></span>
                  <span class="flex mt-[1px]"><svg class="w-[9px] h-[24px]" viewBox="0 0 9 24" fill="none" stroke="#333"><path d="M0 14L2 13L4.5 23L8.5 .5"/></svg>
                  <span class="flex items-center gap-[8px] border-t border-[#333] h-[21px]"><span>(0.922)<sup>2</sup></span><span>−</span><span>0.750</span><span>·</span><span>(0.895)<sup>2</sup></span></span></span>
                </span></span>
            </div>
            <div class="mt-[22px] flex h-4 items-center"><span class="ml-[32px] w-[24px]">=</span><span>0.70</span></div>

            <div class="mt-[9px] flex h-4 items-center"><span class="w-[31px]">χ<sub>&nbsp;op</sub></span><span class="w-[24px]">=</span><span>min (χ<sub>&nbsp;z</sub>,&nbsp; χ<sub>&nbsp;LT</sub>)</span></div>
            <div class="mt-[4px] flex h-4 items-center"><span class="ml-[31px] w-[24px]">=</span><span>min (0.66,&nbsp; 0.70)</span></div>
            <div class="mt-[3px] flex h-4 items-center"><span class="ml-[31px] w-[24px] text-[#888]">=</span><span>0.664</span></div>

            <div class="-ml-[3px] mt-[10px] w-[122px] h-[86px] border border-[#c8c8c8] pl-[2px] pt-[8px]">
              <div class="flex h-4 items-center"><span class="w-[22px]">η</span><span class="w-[24px]">=</span>
                <span class="flex flex-col items-center w-[55px]"><span class="h-[16px] leading-[12px] pb-[3px] flex items-end">γ<sub>&nbsp;M1</sub></span><span class="h-px w-full bg-[#333]"></span><span class="h-[16px] leading-[20px] text-[10px]">χ<sub>&nbsp;op</sub>&nbsp; ·&nbsp; α<sub>ult,k</sub></span></span></div>
              <div class="mt-[20px] flex h-4 items-center"><span class="ml-[22px] w-[24px]">=</span>
                <span class="flex flex-col items-center w-[69px]"><span class="h-[14px] leading-[14px]">1.10</span><span class="h-px w-full bg-[#333]"></span><span class="h-[14px] leading-[16px]">0.664&nbsp; ·&nbsp; 1.728</span></span></div>
              <div class="mt-[9px] flex h-4 items-center"><span class="ml-[22px] w-[23px]">=</span><span>0.958</span></div>
            </div>
            <div class="-ml-[3px] mt-[10px] w-[119px] h-[20px] border border-[#c8c8c8] pl-[3px] flex items-center"><span class="w-[23px]">η</span><span class="w-[23px]">=</span><span>0.958</span><span class="ml-[8px]">≤ 1</span><svg class="ml-[4px] -mt-[3px] w-[9px] h-[7px]" viewBox="0 0 9 7" fill="none" stroke="#2fb344" stroke-width="2"><path d="M.7 3.5L3.3 6L8.3 .7"/></svg></div>
          </div>
          <!-- references -->
          <div class="pl-[7px] font-['Liberation_Sans',sans-serif] text-[9.2px] tracking-normal text-[#333]">
            <div class="mt-[50px] h-4">6.3.1.2(1)</div>
            <div class="mt-[72px] h-4">6.3.1.2(1), Gl. 6.49</div>
            <div class="mt-[106px] h-4">6.3.2.3(1)</div>
            <div class="mt-[72px] h-4">6.3.2.3(1), Gl. 6.57</div>
            <div class="mt-[106px] h-4">6.3.4(4)</div>
            <div class="mt-[49px] h-4">6.3.4(2), Gl. 6.63</div>
          </div>
        </div>

        <!-- legend -->
        <div class="pt-[16px] pl-[10px] text-[#333] text-[10.2px] tracking-normal [&>div]:flex [&>div]:h-5 [&>div]:items-center [&>div>span:first-child]:w-[36px] [&>div>span:first-child]:text-[12px]">
          <div class="!h-[19px]"><span>N<sub>Rk</sub></span><span>Charakteristischer Wert der Druckbeanspruchbarkeit</span></div>
          <div class="!h-[19px]"><span>A</span><span>Querschnittsfläche</span></div>
          <div><span>f<sub>y</sub></span><span>Streckgrenze</span></div>
          <div><span>M<sub>y,Rk</sub></span><span>Charakteristischer Wert der Biegemomententragfähigkeit</span></div>
          <div><span>W<sub>pl,y</sub></span><span>Plastisches Widerstandsmoment</span></div>
          <div><span>η<sub>ult,k</sub></span><span>Maximale Querschnittsausnutzung</span></div>
          <div><span>N<sub>Ed</sub></span><span>Bemessungsnormalkraft</span></div>
          <div><span>M<sub>y,Ed</sub></span><span>Bemessungsbiegemoment</span></div>
          <div><span>α<sub>ult,k</sub></span><span>Lastvergrößerungsfaktor</span></div>
          <div><span>λ̄<sub>op</sub></span><span>Dimensionslose Schlankheit</span></div>
          <div><span>α<sub>cr,op</sub></span><span>Lastvergrößerungsfaktor</span></div>
          <div><span>Φ<sub>z</sub></span><span>Wert zur Ermittlung des Abminderungsbeiwerts χ</span></div>
          <div><span>α<sub>z</sub></span><span>Imperfektionsbeiwert</span></div>
          <div><span>χ<sub>z</sub></span><span>Reduktionsfaktor</span></div>
          <div><span>Φ<sub>LT</sub></span><span>Wert zur Ermittlung des Abminderungsbeiwerts χ</span></div>
          <div><span>α<sub>LT</sub></span><span>Imperfektionsbeiwert</span></div>
          <div><span>λ̄<sub>LT,0</sub></span><span>Grenzschlankheit</span></div>
          <div class="!h-[19px]"><span>β</span><span>Parameter</span></div>
        </div>
      </div>

      <!-- scrollbar -->
      <div class="w-[17px] bg-[#f0f0f0] flex flex-col items-center">
        <div class="h-[17px] w-full flex items-center justify-center"><svg class="w-[8px] h-[5px]" viewBox="0 0 8 5"><path d="M0 5L4 0L8 5Z" fill="#555"/></svg></div>
        <div class="mt-[296px] w-[13px] h-[660px] bg-[#bebebe]"></div>
        <div class="mt-auto h-[17px] w-full flex items-center justify-center"><svg class="w-[8px] h-[5px]" viewBox="0 0 8 5"><path d="M0 0L4 5L8 0Z" fill="#555"/></svg></div>
      </div>
    </div>

    <!-- lower toolbar -->
    <div class="flex gap-[3px] pl-[5px] pt-[4px]">
      <div class="w-[25px] h-[21px] bg-[#cce4f7] flex items-center justify-center">
        <svg class="w-[17px] h-[17px]" viewBox="0 0 17 17"><rect x="1" y="1" width="12" height="12" fill="#d8e4d0"/><rect x="1" y="1" width="6" height="4" fill="#6a9a5a"/><rect x="7" y="3" width="4" height="3" fill="#8ab84a"/><rect x="2" y="7" width="8" height="2" fill="#b8b8b8"/><rect x="2" y="10" width="10" height="3" fill="#f0f0f0"/><rect x="9" y="10" width="7" height="6" fill="#3a6ea5"/><rect x="11" y="11" width="3" height="2" fill="#cfe2f5"/></svg>
      </div>
      <div class="w-[25px] h-[21px] bg-[#cce4f7] flex items-center justify-center">
        <svg class="w-[15px] h-[17px]" viewBox="0 0 15 17" fill="none" stroke="#555"><path d="M6 1.5H15M6 5.5H15M6 9.5H15M6 13.5H15M6 16.5H15"/><path d="M3 2V2.7M3 4V5M3 6.5V10" stroke="#333"/><path d="M0 10H6L3 15Z" fill="#333" stroke="none"/></svg>
      </div>
      <div class="w-[25px] h-[21px] bg-[#cce4f7] border border-[#0d4f8c] flex items-center justify-center gap-[1px] font-['Liberation_Sans',sans-serif] font-bold text-[8px] leading-[8px] text-[#333]">
        <span class="flex flex-col items-center"><span>x</span><span class="h-px w-[6px] bg-[#333]"></span><span>y</span></span><span>=</span><span class="flex flex-col items-center"><span>7</span><span class="h-px w-[6px] bg-[#333]"></span><span>4</span></span>
      </div>
      <div class="w-[37px] h-[21px] bg-[#cce4f7] flex items-center pl-[2px]">
        <svg class="w-[17px] h-[15px]" viewBox="0 0 17 15"><rect x="3" y="0" width="11" height="4" fill="#444"/><path d="M1.5 4.5H15.5a1 1 0 0 1 1 1V12H13.5V9H3.5V12H.5V5.5a1 1 0 0 1 1-1Z" fill="#555"/><rect x="4" y="9.5" width="9" height="5" fill="#f6f6f6" stroke="#555"/><path d="M5.5 12H11.5" stroke="#555"/></svg>
        <svg class="ml-[7px] w-[7px] h-[4px]" viewBox="0 0 7 4"><path d="M0 0H7L3.5 4Z" fill="#222"/></svg>
      </div>
    </div>
  </div>
</div>

<!-- footer -->
<div class="h-[42px] shrink-0 flex items-start pt-[10px] pl-[9px] pr-[10px] bg-white">
  <div class="w-[25px] h-[21px] bg-[#cce4f7] flex flex-col items-center pt-[2px]">
    <div class="w-[16px] h-[5px] bg-[#93d66e] border border-[#7bb85c]"></div>
    <div class="text-[10px] leading-[12px] font-['Liberation_Sans',sans-serif] font-bold text-[#1c2c50]">0,<span class="underline">00</span></div>
  </div>
  <div class="ml-auto w-[81px] h-[21px] bg-[#e1e1e1] border border-[#adadad] flex items-center justify-center">Schließen</div>
</div>

</div>
</body>
</html>
